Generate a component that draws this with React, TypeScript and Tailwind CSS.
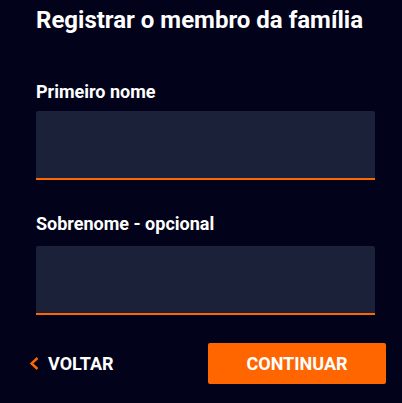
import React from "react";

export default function App() {
  return (
    <div className="w-full h-[403px] bg-[#02021a] text-white overflow-hidden" style={{ fontFamily: "Roboto, 'Noto Sans', sans-serif" }}>
      <div className="pl-9 pr-[27px]">
        <h1 className="pt-[5px] text-[24px] leading-[30px] font-bold text-white">Registrar o membro da família</h1>
        <label className="block mt-[45px] text-[18px] leading-[24px] font-bold">Primeiro nome</label>
        <div className="mt-[7px] h-[69px] bg-[#1a2139] rounded-t-[2px] border-b-2 border-[#ff6600]" />
        <label className="block mt-[32px] text-[18px] leading-[24px] font-bold">Sobrenome - opcional</label>
        <div className="mt-[10px] h-[69px] bg-[#1a2139] rounded-t-[2px] border-b-2 border-[#ff6600]" />
      </div>
      <div className="flex items-center justify-between pl-[29px] pr-[16px] mt-[28px]">
        <button className="flex items-center gap-[9px] text-[18px] font-bold text-white">
          <svg width="10" height="13" viewBox="0 0 10 13" fill="none">
            <path d="M8.5 1 L2.5 6.5 L8.5 12" stroke="#ff6600" strokeWidth="2.4" />
          </svg>
          VOLTAR
        </button>
        <button className="w-[178px] h-[41px] bg-[#ff6600] rounded-[2px] text-[18px] font-bold text-white">CONTINUAR</button>
      </div>
    </div>
  );
}
